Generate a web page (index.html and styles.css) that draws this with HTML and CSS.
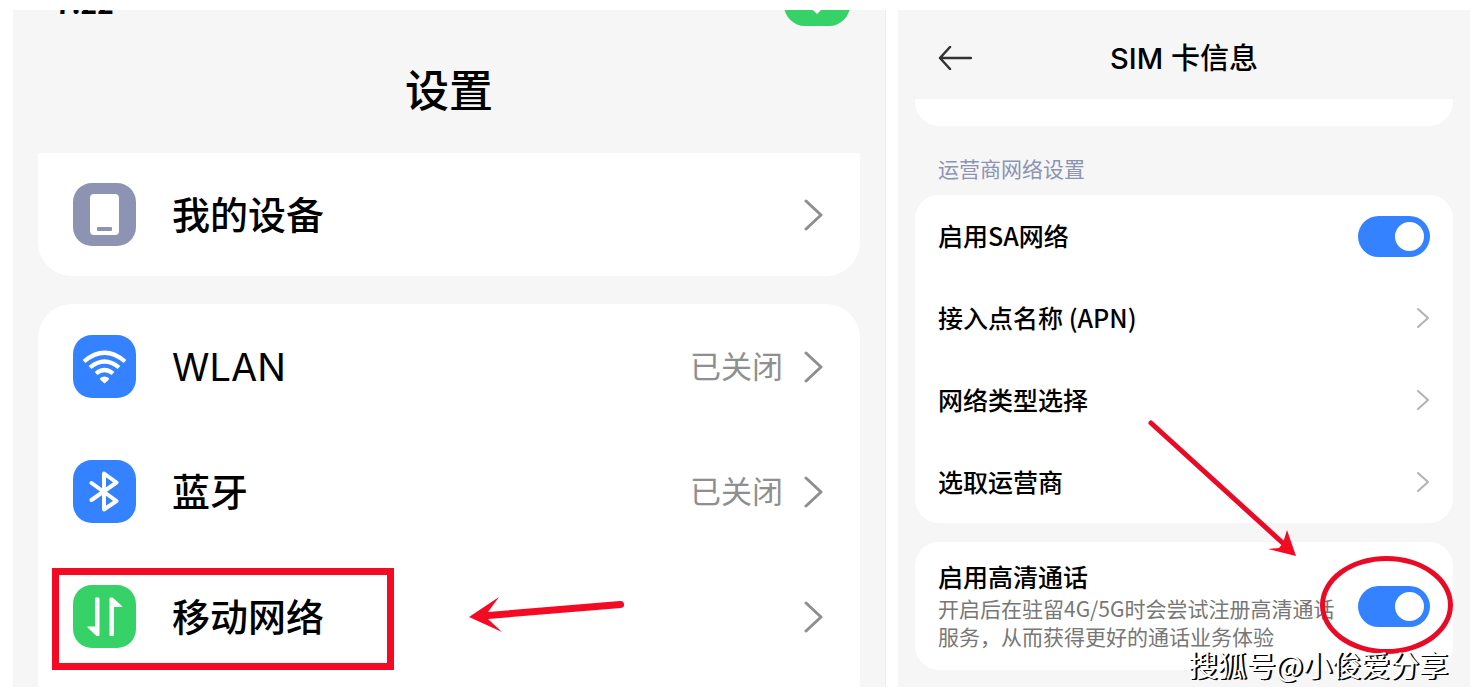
FILE: index.html
```html
<!DOCTYPE html>
<html lang="zh-CN">
  <head>
    <meta charset="UTF-8" />
    <meta name="viewport" content="width=device-width, initial-scale=1.0" />
    <title>设置</title>
    <link rel="stylesheet" href="styles.css">
  </head>
  <body>
    <main class="screens">
      <section class="screen settings">
        <div class="status-bar">
          <span class="clock">7:22</span>
          <span class="status-pill">
            <svg width="16" height="10" viewBox="0 0 16 10"><path d="M2 0h12L8 6z" fill="#fff" /></svg>
          </span>
        </div>
        <h1>设置</h1>

        <div class="card card-cut">
          <a class="row" href="#device">
            <svg class="icon" viewBox="0 0 63 63">
              <rect width="63" height="63" rx="19" fill="#8c93b3" />
              <rect x="17" y="11" width="29" height="41" rx="4" fill="#fff" />
              <rect x="24" y="44" width="15" height="4" rx="1" fill="#8c93b3" />
            </svg>
            <span class="name">我的设备</span>
            <svg class="chevron" viewBox="0 0 20 32"><path d="M2 2l15 14L2 30" /></svg>
          </a>
        </div>

        <div class="card card-list">
          <a class="row" href="#wlan">
            <svg class="icon" viewBox="0 0 63 63">
              <rect width="63" height="63" rx="19" fill="#3482ff" />
              <g fill="none" stroke="#fff" stroke-width="4.2">
                <path d="M11 26.500Q31.500 9 52 26.500" />
                <path d="M17 32.500Q31.500 20.500 46 32.500" />
                <path d="M23 38.500Q31.500 31.500 40 38.500" />
              </g>
              <path d="M27 43Q31.500 40 36 43L35.500 45L31.500 48.500L27.500 45z" fill="#fff" />
            </svg>
            <span class="name latin">WLAN</span>
            <span class="value">已关闭</span>
            <svg class="chevron" viewBox="0 0 20 32"><path d="M2 2l15 14L2 30" /></svg>
          </a>
          <a class="row" href="#bluetooth">
            <svg class="icon" viewBox="0 0 63 63">
              <rect width="63" height="63" rx="19" fill="#3482ff" />
              <path d="M18.500 23L43.500 41L31 49.500V13.500L43.500 22.500L18.500 40" fill="none" stroke="#fff" stroke-width="4" stroke-linecap="round" stroke-linejoin="round" />
            </svg>
            <span class="name">蓝牙</span>
            <span class="value">已关闭</span>
            <svg class="chevron" viewBox="0 0 20 32"><path d="M2 2l15 14L2 30" /></svg>
          </a>
          <a class="row" href="#mobile">
            <svg class="icon" viewBox="0 0 63 63">
              <rect width="63" height="63" rx="19" fill="#37d267" />
              <path d="M22 13.500Q22 12.500 23 12.500H25.500Q26.500 12.500 26.500 13.500V50Q26.500 51 25.500 51H23.500L14.500 42.500Q14 41.500 15 41.500H22z" fill="#fff" />
              <path d="M36.500 50V13.500Q36.500 12.500 37.500 12.500H39.500L49 21Q49.500 22 48.500 22H41V50Q41 51 40 51H37.500Q36.500 51 36.500 50z" fill="#fff" />
            </svg>
            <span class="name">移动网络</span>
            <svg class="chevron" viewBox="0 0 20 32"><path d="M2 2l15 14L2 30" /></svg>
            <span class="mark-box"></span>
            <svg class="mark-arrow-left" viewBox="0 0 160 42">
              <path d="M1 23L31 3L20 18L152 7A3.500 3.500 0 0 1 153 14L20 25L34 38z" />
            </svg>
          </a>
        </div>
      </section>

      <section class="screen sim">
        <header class="sim-header">
          <button type="button" class="back" aria-label="返回">
            <svg width="34" height="24" viewBox="0 0 34 24"><path d="M12 1L2 12l10 11M2 12h31" /></svg>
          </button>
          <h2>SIM 卡信息</h2>
        </header>

        <div class="card card-tail"></div>
        <h3>运营商网络设置</h3>

        <div class="card">
          <div class="row">
            <label class="name" for="sa">启用SA网络</label>
            <input class="toggle" type="checkbox" id="sa" checked />
          </div>
          <a class="row" href="#apn">
            <span class="name">接入点名称 (APN)</span>
            <svg class="chevron" viewBox="0 0 14 22"><path d="M2 2l10 9-10 9" /></svg>
          </a>
          <a class="row" href="#type">
            <span class="name">网络类型选择</span>
            <svg class="chevron" viewBox="0 0 14 22"><path d="M2 2l10 9-10 9" /></svg>
          </a>
          <a class="row" href="#carrier">
            <span class="name">选取运营商</span>
            <svg class="chevron" viewBox="0 0 14 22"><path d="M2 2l10 9-10 9" /></svg>
          </a>
        </div>

        <div class="card card-hd">
          <div class="hd-text">
            <label for="hd">启用高清通话</label>
            <p>开启后在驻留4G/5G时会尝试注册高清通话服务，从而获得更好的通话业务体验</p>
          </div>
          <input class="toggle" type="checkbox" id="hd" checked />
          <span class="mark-circle"></span>
          <svg class="mark-arrow-down" viewBox="0 0 160 142">
            <path class="shaft" d="M8 5l134 122" />
            <path d="M153 138L144 112L140 125L136 130L125 131z" />
          </svg>
        </div>
        <div class="watermark">搜狐号@小俊爱分享</div>
      </section>
    </main>
  </body>
</html>
```
FILE: styles.css
```css
* {
  box-sizing: border-box;
  margin: 0;
  padding: 0;
}

body {
  background-color: #fff;
  color: #000;
  font-family: 'Noto Sans CJK SC', sans-serif;
  padding: 10px 11px 10px 13px;
}

a {
  color: inherit;
  text-decoration: none;
}

.screens {
  display: grid;
  grid-template-columns: 873fr 572fr;
  gap: 12px;
}

.screen {
  position: relative;
  overflow: hidden;
  background-color: #f6f6f6;
}

.card {
  background-color: #fff;
}

.row {
  position: relative;
  display: flex;
  align-items: center;
}

.name {
  flex: 1;
}

.chevron {
  fill: none;
  stroke-linecap: round;
  stroke-linejoin: round;
}

/* settings */
.settings {
  padding: 0 25px;
  border-right: 1px solid #eee;
}

.status-bar {
  position: absolute;
  top: -26px;
  left: 42px;
  right: 35px;
  display: flex;
  justify-content: space-between;
}

.clock {
  font-size: 28px;
  font-weight: bold;
  line-height: 36px;
}

.status-pill {
  display: flex;
  justify-content: center;
  align-items: center;
  width: 66px;
  height: 42px;
  border-radius: 21px;
  background-color: #37d267;
}

.status-pill svg {
  margin-top: 16px;
}

h1 {
  padding: 46px 0 33px;
  font-size: 44px;
  font-weight: 500;
  line-height: 64px;
  text-align: center;
}

.settings .card {
  border-radius: 34px;
}

.settings .card-cut {
  border-radius: 0 0 34px 34px;
  margin-bottom: 28px;
}

.settings .card-list {
  border-radius: 34px 34px 0 0;
  padding-bottom: 8px;
}

.settings .row {
  height: 125px;
  padding: 0 36px 0 35px;
  font-family: Inter, 'Noto Sans CJK SC', sans-serif;
  font-size: 38px;
  font-weight: 500;
  line-height: 56px;
}

.settings .card-cut .row {
  height: 123px;
}

.settings .latin {
  font-weight: 400;
}

.icon {
  width: 63px;
  height: 63px;
  margin-right: 36px;
}

.value {
  color: #8f8f8f;
  font-size: 31px;
  font-weight: 400;
}

.settings .chevron {
  width: 20px;
  height: 32px;
  margin-left: 21px;
  stroke: #8f8f8f;
  stroke-width: 3;
}

/* sim card info */
.sim {
  padding: 0 17px;
}

.sim-header {
  position: relative;
  padding: 29px 0 20px;
}

h2 {
  font-family: Inter, 'Noto Sans CJK SC', sans-serif;
  font-size: 29px;
  font-weight: 500;
  line-height: 40px;
  text-align: center;
}

.back {
  position: absolute;
  left: 23px;
  top: 36px;
  width: 34px;
  height: 24px;
  border: none;
  background: none;
  cursor: pointer;
}

.back svg {
  display: block;
  fill: none;
  stroke: #333;
  stroke-width: 2.5;
  stroke-linecap: round;
  stroke-linejoin: round;
}

.sim .card {
  border-radius: 24px;
}

.sim .card-tail {
  height: 27px;
  border-radius: 0 0 24px 24px;
}

h3 {
  padding: 26px 23px 11px;
  color: #8c93b3;
  font-size: 21px;
  font-weight: 400;
  line-height: 32px;
}

.sim .row {
  height: 82px;
  padding: 0 23px;
  font-size: 25px;
  font-weight: 500;
}

.sim .name {
  padding-bottom: 3px;
}

.sim .chevron {
  width: 14px;
  height: 22px;
  stroke: #b2b2b2;
  stroke-width: 2;
}

.toggle {
  position: relative;
  flex: none;
  appearance: none;
  width: 72px;
  height: 41px;
  border-radius: 21px;
  background-color: #ccc;
  cursor: pointer;
}

.toggle::before {
  content: '';
  position: absolute;
  top: 6px;
  left: 6px;
  width: 29px;
  height: 29px;
  border-radius: 50%;
  background-color: #fff;
}

.toggle:checked {
  background-color: #3482ff;
}

.toggle:checked::before {
  left: 37px;
}

.sim .card-hd {
  position: relative;
  display: flex;
  align-items: center;
  gap: 16px;
  margin: 19px 0 17px;
  padding: 16px 23px;
}

.hd-text {
  flex: 1;
  padding-bottom: 4px;
}

.hd-text label {
  display: block;
  font-size: 25px;
  font-weight: 500;
  line-height: 36px;
}

.hd-text p {
  color: #777;
  font-size: 21px;
  line-height: 28px;
}

/* red marks */
.mark-box {
  position: absolute;
  left: 14px;
  top: 14px;
  width: 342px;
  height: 102px;
  border: 7px solid #f50a23;
}

.mark-arrow-left {
  position: absolute;
  left: 430px;
  top: 40px;
  width: 160px;
  height: 42px;
  fill: #f50a23;
}

.mark-circle {
  position: absolute;
  right: 0;
  top: 14px;
  width: 133px;
  height: 98px;
  border: 5px solid #ea0a26;
  border-radius: 50%;
  pointer-events: none;
}

.mark-arrow-down {
  position: absolute;
  right: 150px;
  top: -124px;
  width: 160px;
  height: 142px;
  fill: #f50a23;
  pointer-events: none;
}

.mark-arrow-down .shaft {
  stroke: #ea0a26;
  stroke-width: 5;
  stroke-linecap: round;
}

.watermark {
  position: absolute;
  right: 22px;
  bottom: 3px;
  color: #fff;
  font-size: 29px;
  line-height: 40px;
  text-shadow: 1px 1px 0 #000, 2px 1px 0 #000;
}
```
